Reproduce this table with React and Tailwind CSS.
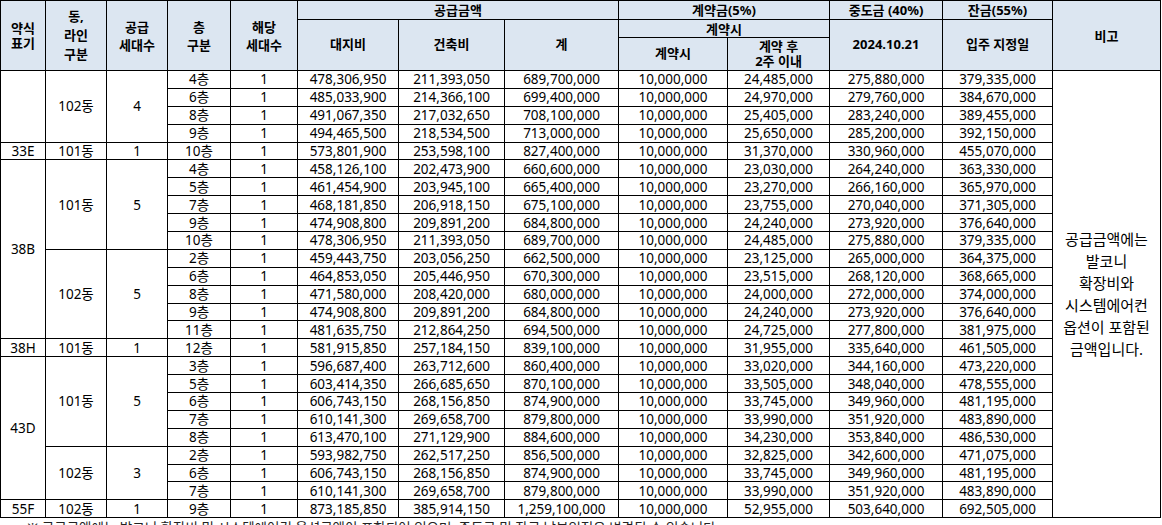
const groups = [
  {
    type: "",
    blocks: [
      {
        dong: "102동",
        count: "4",
        rows: [
          ["4층", "478,306,950", "211,393,050", "689,700,000", "10,000,000", "24,485,000", "275,880,000", "379,335,000"],
          ["6층", "485,033,900", "214,366,100", "699,400,000", "10,000,000", "24,970,000", "279,760,000", "384,670,000"],
          ["8층", "491,067,350", "217,032,650", "708,100,000", "10,000,000", "25,405,000", "283,240,000", "389,455,000"],
          ["9층", "494,465,500", "218,534,500", "713,000,000", "10,000,000", "25,650,000", "285,200,000", "392,150,000"],
        ],
      },
    ],
  },
  {
    type: "33E",
    blocks: [
      {
        dong: "101동",
        count: "1",
        rows: [["10층", "573,801,900", "253,598,100", "827,400,000", "10,000,000", "31,370,000", "330,960,000", "455,070,000"]],
      },
    ],
  },
  {
    type: "38B",
    blocks: [
      {
        dong: "101동",
        count: "5",
        rows: [
          ["4층", "458,126,100", "202,473,900", "660,600,000", "10,000,000", "23,030,000", "264,240,000", "363,330,000"],
          ["5층", "461,454,900", "203,945,100", "665,400,000", "10,000,000", "23,270,000", "266,160,000", "365,970,000"],
          ["7층", "468,181,850", "206,918,150", "675,100,000", "10,000,000", "23,755,000", "270,040,000", "371,305,000"],
          ["9층", "474,908,800", "209,891,200", "684,800,000", "10,000,000", "24,240,000", "273,920,000", "376,640,000"],
          ["10층", "478,306,950", "211,393,050", "689,700,000", "10,000,000", "24,485,000", "275,880,000", "379,335,000"],
        ],
      },
      {
        dong: "102동",
        count: "5",
        rows: [
          ["2층", "459,443,750", "203,056,250", "662,500,000", "10,000,000", "23,125,000", "265,000,000", "364,375,000"],
          ["6층", "464,853,050", "205,446,950", "670,300,000", "10,000,000", "23,515,000", "268,120,000", "368,665,000"],
          ["8층", "471,580,000", "208,420,000", "680,000,000", "10,000,000", "24,000,000", "272,000,000", "374,000,000"],
          ["9층", "474,908,800", "209,891,200", "684,800,000", "10,000,000", "24,240,000", "273,920,000", "376,640,000"],
          ["11층", "481,635,750", "212,864,250", "694,500,000", "10,000,000", "24,725,000", "277,800,000", "381,975,000"],
        ],
      },
    ],
  },
  {
    type: "38H",
    blocks: [
      {
        dong: "101동",
        count: "1",
        rows: [["12층", "581,915,850", "257,184,150", "839,100,000", "10,000,000", "31,955,000", "335,640,000", "461,505,000"]],
      },
    ],
  },
  {
    type: "43D",
    blocks: [
      {
        dong: "101동",
        count: "5",
        rows: [
          ["3층", "596,687,400", "263,712,600", "860,400,000", "10,000,000", "33,020,000", "344,160,000", "473,220,000"],
          ["5층", "603,414,350", "266,685,650", "870,100,000", "10,000,000", "33,505,000", "348,040,000", "478,555,000"],
          ["6층", "606,743,150", "268,156,850", "874,900,000", "10,000,000", "33,745,000", "349,960,000", "481,195,000"],
          ["7층", "610,141,300", "269,658,700", "879,800,000", "10,000,000", "33,990,000", "351,920,000", "483,890,000"],
          ["8층", "613,470,100", "271,129,900", "884,600,000", "10,000,000", "34,230,000", "353,840,000", "486,530,000"],
        ],
      },
      {
        dong: "102동",
        count: "3",
        rows: [
          ["2층", "593,982,750", "262,517,250", "856,500,000", "10,000,000", "32,825,000", "342,600,000", "471,075,000"],
          ["6층", "606,743,150", "268,156,850", "874,900,000", "10,000,000", "33,745,000", "349,960,000", "481,195,000"],
          ["7층", "610,141,300", "269,658,700", "879,800,000", "10,000,000", "33,990,000", "351,920,000", "483,890,000"],
        ],
      },
    ],
  },
  {
    type: "55F",
    blocks: [
      {
        dong: "102동",
        count: "1",
        rows: [["9층", "873,185,850", "385,914,150", "1,259,100,000", "10,000,000", "52,955,000", "503,640,000", "692,505,000"]],
      },
    ],
  },
];

const totalRows = groups.reduce((n, g) => n + g.blocks.reduce((m, b) => m + b.rows.length, 0), 0);

const th = "border border-black bg-[#dce6f1] p-0 text-center align-middle font-bold text-[13px]";
const td = "border border-black p-0 text-center align-middle";

function Body() {
  const trs = [];
  let first = true;
  groups.forEach((g, gi) => {
    const span = g.blocks.reduce((m, b) => m + b.rows.length, 0);
    g.blocks.forEach((b, bi) => {
      b.rows.forEach((r, ri) => {
        trs.push(
          <tr key={`${gi}-${bi}-${ri}`} className="h-[17.9px]">
            {bi === 0 && ri === 0 && (
              <td rowSpan={span} className={td}>
                {g.type}
              </td>
            )}
            {ri === 0 && (
              <>
                <td rowSpan={b.rows.length} className={td}>
                  {b.dong}
                </td>
                <td rowSpan={b.rows.length} className={td}>
                  {b.count}
                </td>
              </>
            )}
            <td className={td}>{r[0]}</td>
            <td className={td}>1</td>
            {r.slice(1).map((v, i) => (
              <td key={i} className={td}>
                {v}
              </td>
            ))}
            {first && (
              <td rowSpan={totalRows} className={`${td} text-[15px] leading-[22px]`}>
                공급금액에는
                <br />
                발코니
                <br />
                확장비와
                <br />
                시스템에어컨
                <br />
                옵션이 포함된
                <br />
                금액입니다.
              </td>
            )}
          </tr>
        );
        first = false;
      });
    });
  });
  return <tbody className="text-[13.5px] leading-[16px]">{trs}</tbody>;
}

export default function App() {
  const widths = ["w-[45px]", "w-[61px]", "w-[61px]", "w-[63px]", "w-[67px]", "w-[101px]", "w-[106px]", "w-[114px]", "w-[109px]", "w-[102px]", "w-[113px]", "w-[110px]", "w-[108px]"];
  return (
    <div className="h-[525px] overflow-hidden bg-white font-['Noto_Sans','Noto_Sans_CJK_KR',sans-serif] text-black">
      <table className="w-[1160px] table-fixed border-collapse">
        <colgroup>
          {widths.map((w, i) => (
            <col key={i} className={w} />
          ))}
        </colgroup>
        <thead>
          <tr className="h-[19px]">
            <th rowSpan={3} className={`${th} leading-[15px]`}>
              약식
              <br />
              표기
            </th>
            <th rowSpan={3} className={`${th} leading-[19px]`}>
              동,
              <br />
              라인
              <br />
              구분
            </th>
            <th rowSpan={3} className={`${th} leading-[18px]`}>
              공급
              <br />
              세대수
            </th>
            <th rowSpan={3} className={`${th} leading-[18px]`}>
              층
              <br />
              구분
            </th>
            <th rowSpan={3} className={`${th} leading-[18px]`}>
              해당
              <br />
              세대수
            </th>
            <th colSpan={3} className={`${th} leading-[16px]`}>
              공급금액
            </th>
            <th colSpan={2} className={`${th} leading-[16px]`}>
              계약금(5%)
            </th>
            <th className={`${th} leading-[16px]`}>중도금 (40%)</th>
            <th className={`${th} leading-[16px]`}>잔금(55%)</th>
            <th rowSpan={3} className={`${th} leading-[16px]`}>
              비고
            </th>
          </tr>
          <tr className="h-[18px]">
            <th rowSpan={2} className={th}>
              대지비
            </th>
            <th rowSpan={2} className={th}>
              건축비
            </th>
            <th rowSpan={2} className={th}>
              계
            </th>
            <th colSpan={2} className={`${th} leading-[16px]`}>
              계약시
            </th>
            <th rowSpan={2} className={th}>
              2024.10.21
            </th>
            <th rowSpan={2} className={th}>
              입주 지정일
            </th>
          </tr>
          <tr className="h-[33px]">
            <th className={th}>계약시</th>
            <th className={`${th} leading-[15.5px]`}>
              계약 후
              <br />
              2주 이내
            </th>
          </tr>
        </thead>
        <Body />
      </table>
      <div className="pl-[27px] pt-[2px] text-[13.5px] leading-[16px] text-[#222]">
        ※ 공급금액에는 발코니 확장비 및 시스템에어컨 옵션금액이 포함되어 있으며, 중도금 및 잔금 납부일정은 변경될 수 있습니다.
      </div>
    </div>
  );
}
